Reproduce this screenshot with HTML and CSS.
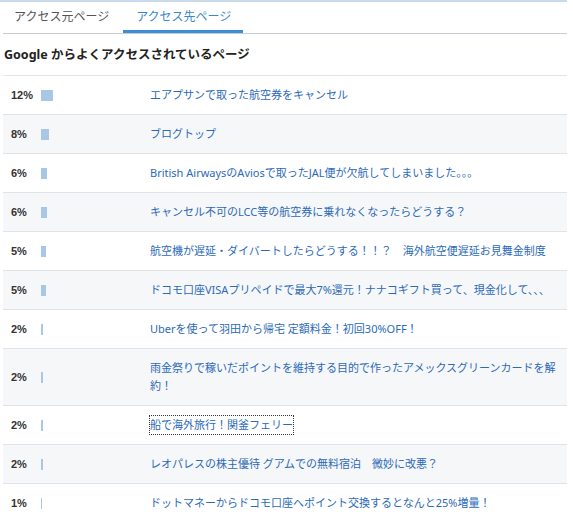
FILE: index.html
```html
<!DOCTYPE html>
<html lang="ja">
<head>
<meta charset="utf-8">
<link rel="stylesheet" href="styles.css">
</head>
<body>
<div class="page">
  <div class="tabs">
    <div class="tab">アクセス元ページ</div>
    <div class="tab active">アクセス先ページ</div>
  </div>
  <h2 class="heading"><span class="brand">Google</span> からよくアクセスされているページ</h2>
  <div class="list">
    <div class="row"><span class="pct">12%</span><span class="barcell"><span class="bar" style="width:12px"></span></span><a class="link">エアプサンで取った航空券をキャンセル</a></div>
    <div class="row"><span class="pct">8%</span><span class="barcell"><span class="bar" style="width:8px"></span></span><a class="link">ブログトップ</a></div>
    <div class="row"><span class="pct">6%</span><span class="barcell"><span class="bar" style="width:6px"></span></span><a class="link">British AirwaysのAviosで取ったJAL便が欠航してしまいました。。。</a></div>
    <div class="row"><span class="pct">6%</span><span class="barcell"><span class="bar" style="width:6px"></span></span><a class="link">キャンセル不可のLCC等の航空券に乗れなくなったらどうする？</a></div>
    <div class="row"><span class="pct">5%</span><span class="barcell"><span class="bar" style="width:5px"></span></span><a class="link">航空機が遅延・ダイバートしたらどうする！！？　海外航空便遅延お見舞金制度</a></div>
    <div class="row"><span class="pct">5%</span><span class="barcell"><span class="bar" style="width:5px"></span></span><a class="link">ドコモ口座VISAプリペイドで最大7%還元！ナナコギフト買って、現金化して、、、</a></div>
    <div class="row"><span class="pct">2%</span><span class="barcell"><span class="bar" style="width:2px"></span></span><a class="link">Uberを使って羽田から帰宅 定額料金！初回30%OFF！</a></div>
    <div class="row"><span class="pct">2%</span><span class="barcell"><span class="bar" style="width:2px"></span></span><a class="link">雨金祭りで稼いだポイントを維持する目的で作ったアメックスグリーンカードを解約！</a></div>
    <div class="row"><span class="pct">2%</span><span class="barcell"><span class="bar" style="width:2px"></span></span><a class="link focused">船で海外旅行！関釜フェリー</a></div>
    <div class="row"><span class="pct">2%</span><span class="barcell"><span class="bar" style="width:2px"></span></span><a class="link">レオパレスの株主優待 グアムでの無料宿泊　微妙に改悪？</a></div>
    <div class="row"><span class="pct">1%</span><span class="barcell"><span class="bar" style="width:1px"></span></span><a class="link">ドットマネーからドコモ口座へポイント交換するとなんと25%増量！</a></div>
  </div>
</div>
</body>
</html>
```
FILE: styles.css
```css
html, body {
  margin: 0;
  padding: 0;
  background: #fff;
}
body {
  font-family: "Noto Sans", "Noto Sans CJK JP", sans-serif;
  color: #333;
  overflow: hidden;
}
.page {
  border-top: 2px solid #c9d9ea;
  width: 564px;
  padding-left: 3px;
}
.tabs {
  display: flex;
  height: 31px;
  border-bottom: 1px solid #c5ccd3;
}
.tab {
  font-size: 12px;
  color: #555;
  padding: 5px 13px 0 13px;
  line-height: 20px;
  box-sizing: border-box;
  height: 31px;
  border-bottom: 3px solid transparent;
}
.tab:first-child {
  padding-left: 11px;
  padding-right: 14px;
}
.tab.active {
  color: #3a87cc;
  border-bottom-color: #3b8ed3;
  padding-right: 12px;
}
.heading {
  margin: 0;
  font-size: 12.5px;
  font-weight: bold;
  color: #222;
  height: 41px;
  line-height: 41px;
  padding-left: 1px;
  border-bottom: 1px solid #e1e4e8;
}
.row {
  display: grid;
  grid-template-columns: 38px 109px 1fr;
  align-items: center;
  padding: 10px 10px 10px 0;
  border-bottom: 1px solid #dfe3e7;
  background: #fff;
}
.row:nth-child(even) {
  background: #f6f7f9;
}
.pct {
  font-family: "Liberation Sans", sans-serif;
  font-size: 11px;
  font-weight: bold;
  color: #333;
  padding-left: 8px;
  line-height: 18px;
}
.barcell {
  display: flex;
  align-items: center;
  height: 18px;
}
.bar {
  display: block;
  height: 11px;
  background: #a8c6e5;
}
.link {
  font-size: 11px;
  line-height: 18px;
  color: #2c6ab8;
  text-decoration: none;
}
.link.focused {
  justify-self: start;
  outline: 1px dotted #333;
}
```
